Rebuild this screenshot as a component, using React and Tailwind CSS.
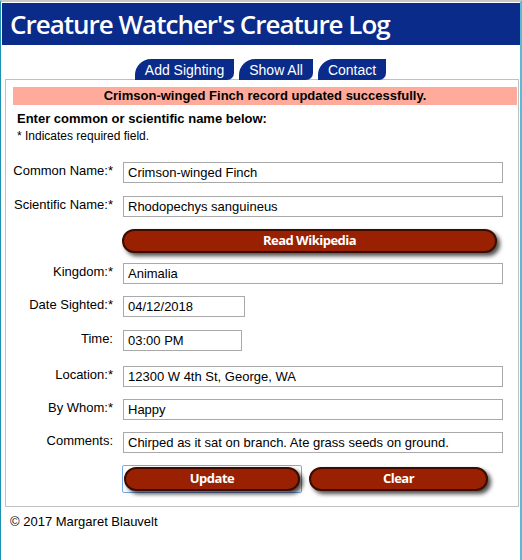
import React from 'react';

const rows = [
    { label: 'Common Name:*', value: 'Crimson-winged Finch', w: 'w-[380px]', mt: 'mt-0' },
    { label: 'Scientific Name:*', value: 'Rhodopechys sanguineus', w: 'w-[380px]', mt: 'mt-[13px]' },
];

const rows2 = [
    { label: 'Kingdom:*', value: 'Animalia', w: 'w-[380px]', mt: 'mt-[10px]' },
    { label: 'Date Sighted:*', value: '04/12/2018', w: 'w-[122px]', mt: 'mt-[12px]' },
    { label: 'Time:', value: '03:00 PM', w: 'w-[119px]', mt: 'mt-[13px]' },
    { label: 'Location:*', value: '12300 W 4th St, George, WA', w: 'w-[380px]', mt: 'mt-[15px]' },
    { label: 'By Whom:*', value: 'Happy', w: 'w-[380px]', mt: 'mt-[12px]' },
    { label: 'Comments:', value: 'Chirped as it sat on branch. Ate grass seeds on ground.', w: 'w-[380px]', mt: 'mt-[12px]' },
];

function Row({ row }) {
    return (
        <div className={`flex items-start gap-[10px] ${row.mt}`}>
            <div className="w-[107px] text-right text-[13px] leading-[15px] pt-[1px] text-black">{row.label}</div>
            <input
                readOnly
                value={row.value}
                className={`${row.w} h-[21px] border border-[#a9a9a9] px-[4px] text-[13px] text-black outline-none`}
            />
        </div>
    );
}

function RedButton({ children, className = '' }) {
    return (
        <button
            className={`h-[24px] rounded-full border-2 border-[#3b0c02] bg-[#992000] text-white text-[13px] font-bold tracking-[-0.5px] shadow-[3px_3px_4px_rgba(0,0,0,0.7)] ${className}`}
            style={{ fontFamily: '"Open Sans", sans-serif' }}
        >
            {children}
        </button>
    );
}

export default function App() {
    return (
        <div
            className="w-[522px] h-[560px] bg-white border-t-2 border-t-[#c8c8c8] border-l border-l-[#1f8fb0] border-r-2 border-r-[#5bbad6] overflow-hidden"
            style={{ fontFamily: '"Liberation Sans", Arial, sans-serif' }}
        >
            {/* Header */}
            <div className="mt-[1px] ml-[1px] h-[42px] bg-[#0a2b8a] flex items-center pl-[8px]">
                <h1
                    className="text-white text-[26px] font-semibold tracking-[-1px]"
                    style={{ fontFamily: '"Open Sans", sans-serif' }}
                >
                    Creature Watcher's Creature Log
                </h1>
            </div>

            {/* Nav tabs */}
            <div className="mt-[14px] flex justify-center gap-[5px] relative z-10 -mb-[1px]">
                {['Add Sighting', 'Show All', 'Contact'].map(t => (
                    <div
                        key={t}
                        className="h-[21px] px-[10px] bg-[#0a2b8a] text-white text-[14px] leading-[22px] rounded-tl-[16px] rounded-br-[7px]"
                    >
                        {t}
                    </div>
                ))}
            </div>

            {/* Content box */}
            <div className="ml-[4px] w-[514px] border border-[#c0c0c0] pt-[7px] pb-[13px]">
                <div className="ml-[7px] mr-[1px] h-[18px] bg-[#ffab9b] text-center text-[13px] font-bold leading-[18px] text-black">
                    Crimson-winged Finch record updated successfully.
                </div>
                <div className="ml-[11px] mt-[6px] text-[13px] font-bold leading-[15px] text-black">
                    Enter common or scientific name below:
                </div>
                <div className="ml-[11px] mt-[3px] text-[12px] leading-[14px] text-black">
                    * Indicates required field.
                </div>

                <div className="mt-[19px]">
                    {rows.map(r => <Row key={r.label} row={r} />)}
                    <div className="mt-[11px] ml-[116px]">
                        <RedButton className="w-[375px]">Read Wikipedia</RedButton>
                    </div>
                    {rows2.map(r => <Row key={r.label} row={r} />)}
                    <div className="mt-[12px] ml-[116px] flex gap-[7px]">
                        <div className="p-[1px] border border-[#7aa6ea] rounded-[2px]">
                            <RedButton className="w-[176px] block">Update</RedButton>
                        </div>
                        <div className="pt-[2px]">
                            <RedButton className="w-[179px] block">Clear</RedButton>
                        </div>
                    </div>
                </div>
            </div>

            {/* Footer */}
            <div className="ml-[9px] mt-[5px] text-[13px] text-black">© 2017 Margaret Blauvelt</div>
        </div>
    );
}
